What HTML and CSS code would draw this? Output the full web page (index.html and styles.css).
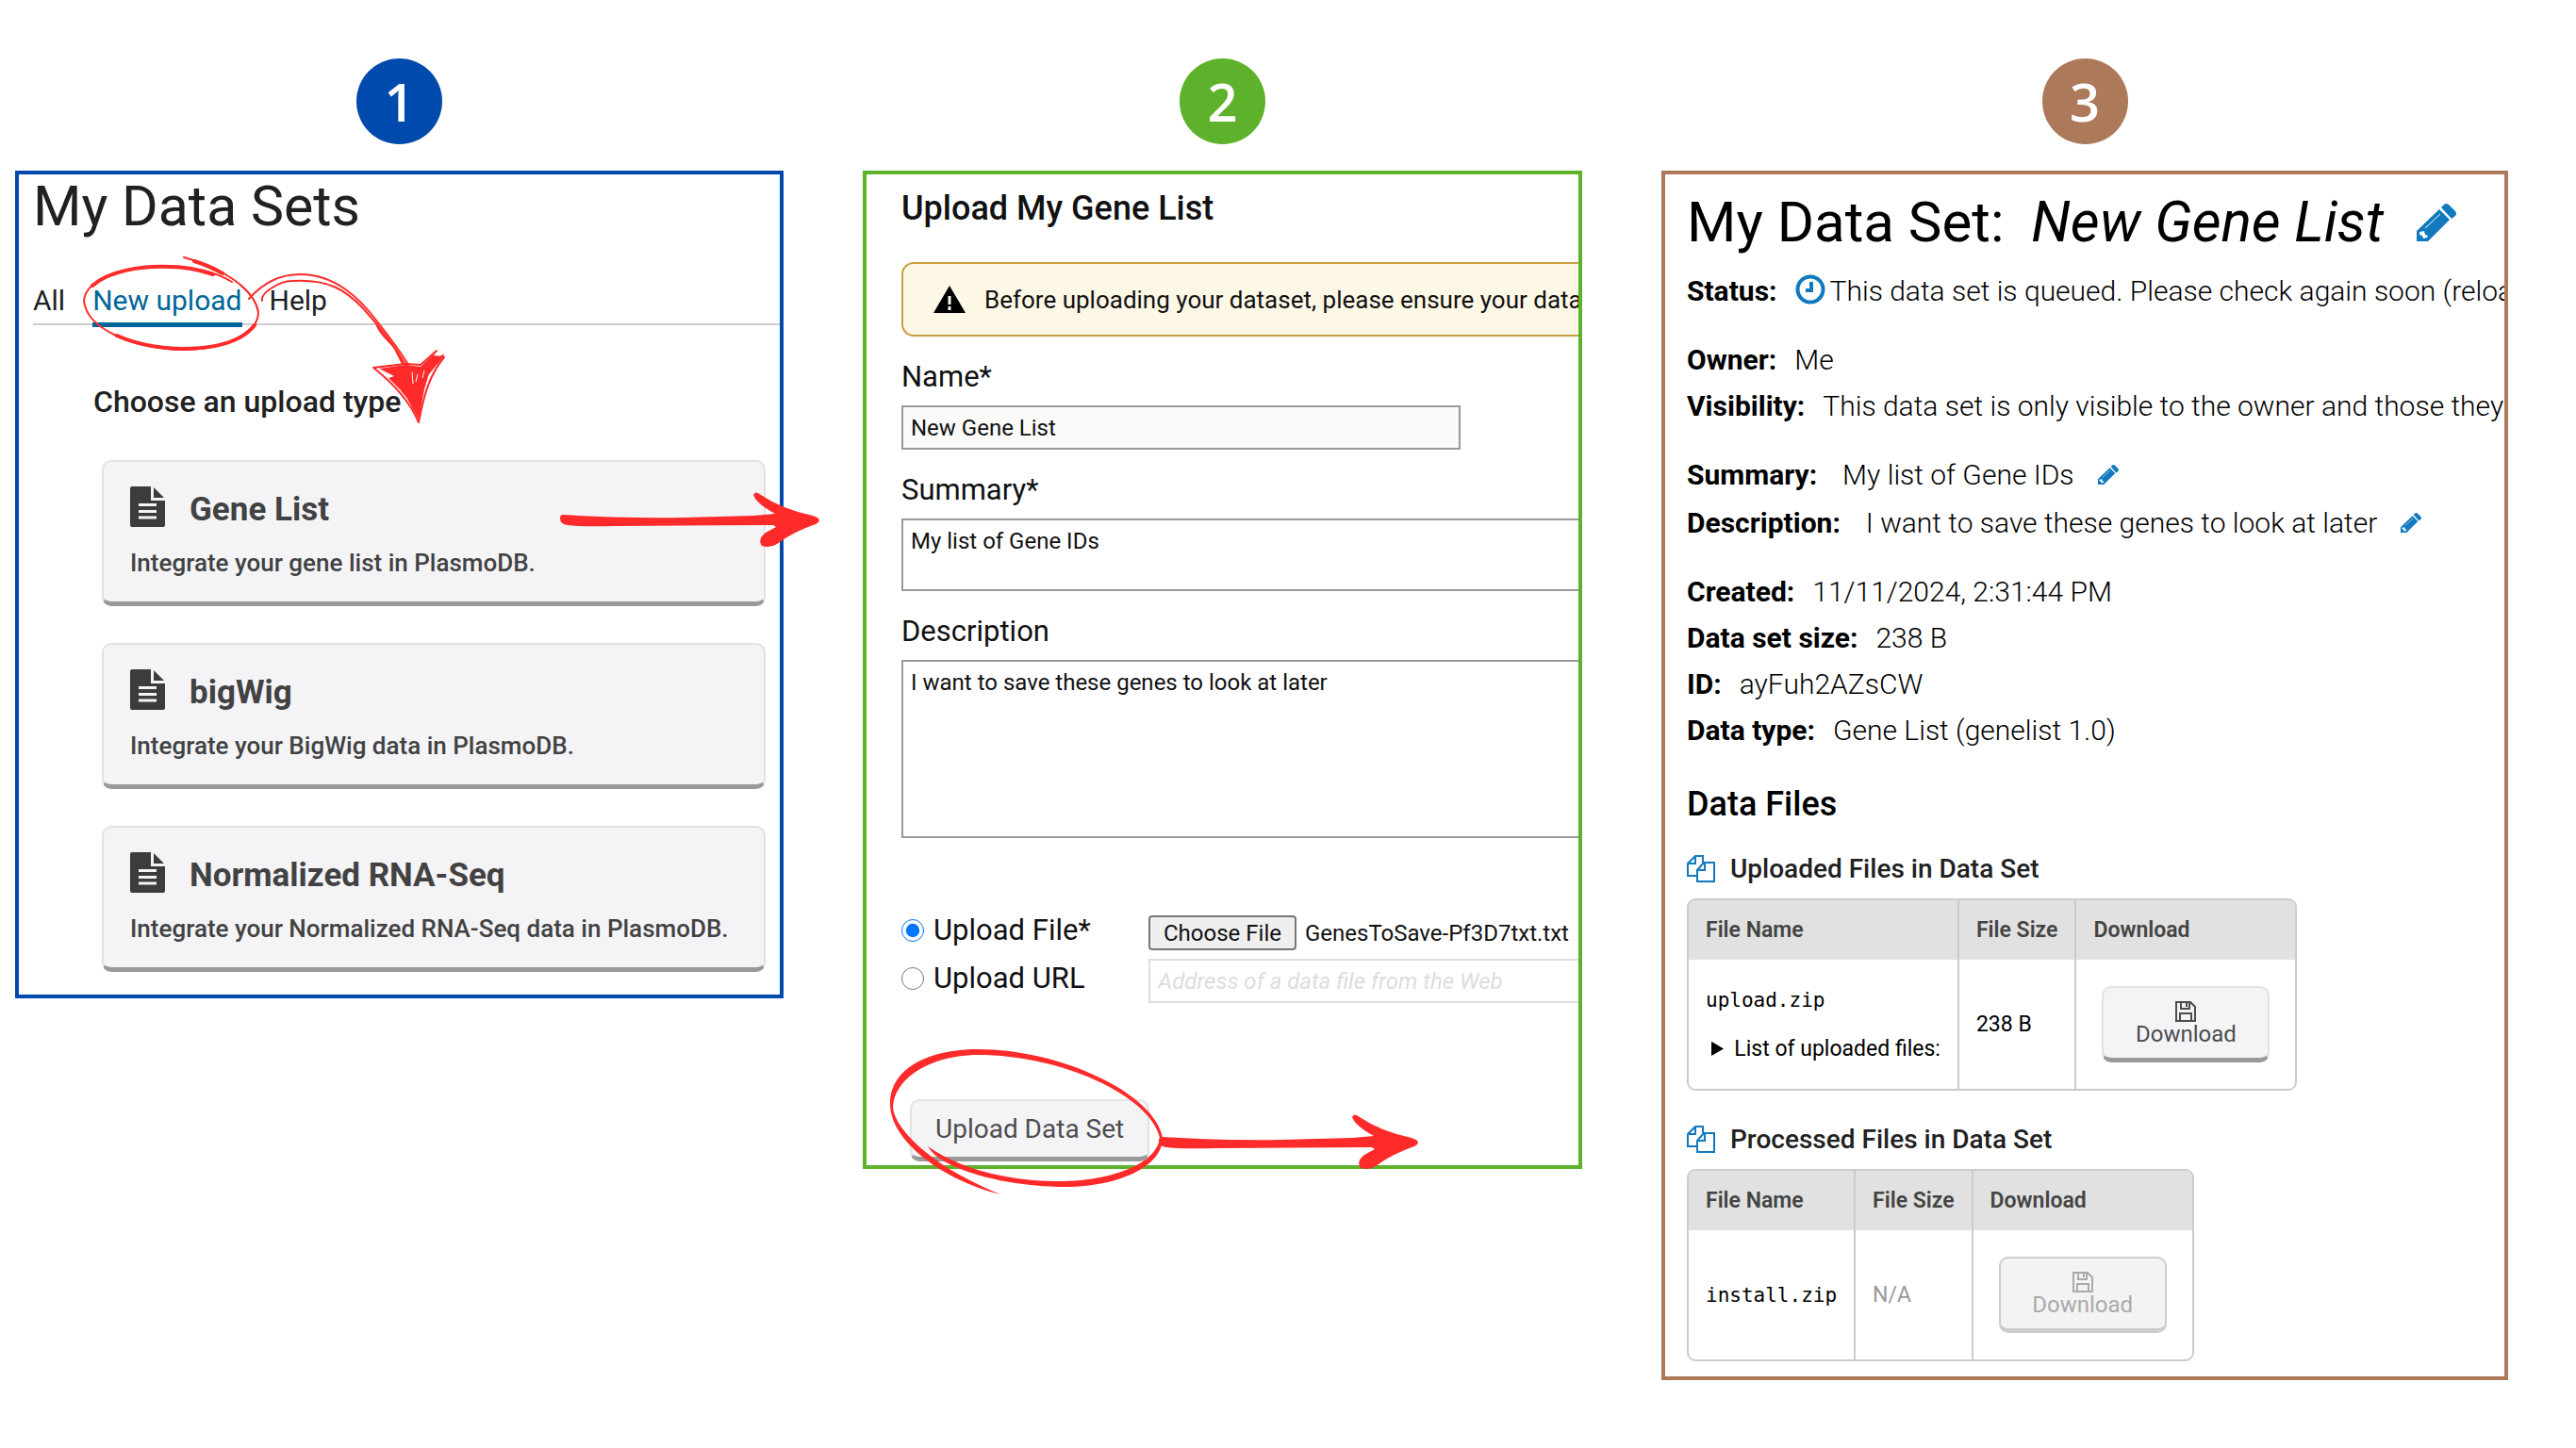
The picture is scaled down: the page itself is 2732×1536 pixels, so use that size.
FILE: index.html
```html
<!DOCTYPE html>
<html lang="en">
<head>
<meta charset="utf-8">
<title>Uploading a gene list</title>
<link rel="stylesheet" href="styles.css">
</head>
<body>
<svg class="sprite" aria-hidden="true">
  <symbol id="pencil" viewBox="0 0 42 40"><path d="M0 40V29L24 6l11 11-23 23zM26 4l3-3q2-2 5 0l7 7q2 3 0 5l-4 3z"/><path d="M3 30l5-1 1 4 3 1-1 2-4 1-1-3-3-1z" fill="#fff"/><path d="M9 26L25 11" stroke="#fff" stroke-width="1" fill="none"/></symbol>
  <symbol id="file" viewBox="0 0 37 43"><path d="M0 2q0-2 2-2h20v15h15v26q0 2-2 2H2q-2 0-2-2z"/><path d="M25 1l11 11H25z"/><path d="M9 19.500h19M9 26.500h19M9 33h19" stroke="#f4f4f7" stroke-width="3"/></symbol>
  <symbol id="copy" viewBox="0 0 30 30"><path d="M11 22H1V9l8-8h8v7M9 1v8H1M11 16l7-8h11v20H11zM19 8v8h-8" fill="none" stroke="currentColor" stroke-width="2"/></symbol>
  <symbol id="save" viewBox="0 0 22 22"><path d="M1 1h15l5 5v15H1zM5 21v-8h12v8M6 1v7h9V1M12 2v4" fill="none" stroke="currentColor" stroke-width="2"/></symbol>
  <symbol id="arrow" viewBox="0 0 276 60"><path d="M3 24Q70 28 130 27L205 25L228 23Q208 12 205 3Q207 -2 213 3Q235 18 268 25Q280 29 271 34Q248 42 233 53Q224 60 214 57Q209 50 218 43L229 37L226 35L60 36Q20 37 8 35Q0 34 0 28Q0 24 3 24z"/></symbol>
</svg>
<main class="steps">
  <section class="step blue">
    <div class="badge">1</div>
    <div class="panel sets">
      <h1 class="title">My Data Sets</h1>
      <nav class="tabs">
        <a href="#all">All</a>
        <a href="#new" class="active">New upload</a>
        <a href="#help">Help</a>
      </nav>
      <h2 class="choose">Choose an upload type</h2>
      <div class="cards">
        <button class="card raised" type="button"><svg><use href="#file"/></svg><strong>Gene List</strong><span>Integrate your gene list in PlasmoDB.</span></button>
        <button class="card raised" type="button"><svg><use href="#file"/></svg><strong>bigWig</strong><span>Integrate your BigWig data in PlasmoDB.</span></button>
        <button class="card raised" type="button"><svg><use href="#file"/></svg><strong>Normalized RNA-Seq</strong><span>Integrate your Normalized RNA-Seq data in PlasmoDB.</span></button>
      </div>
    </div>
    <svg class="ink ink-tab" viewBox="0 0 400 195">
      <g class="stroke">
        <path d="M115 8C155 18 190 42 194 66C194 88 160 106 112 106C60 104 12 84 9 54C11 32 46 18 95 17C125 18 150 24 166 34"/>
        <path class="bold" d="M190 80C176 98 146 105 112 105C84 104 62 99 44 91M18 38C36 22 70 17 100 18C118 18 134 22 146 26M126 12Q142 17 156 25"/>
        <path d="M184 52C200 34 218 26 238 26C276 26 302 52 320 76C335 95 345 108 353 122"/>
        <path d="M198 54C196 46 216 33 230 33C268 31 286 42 305 62C330 90 342 108 350 122"/>
        <path d="M319 78C322 90 335 98 339 105L347 121"/>
        <path d="M316 125L350 121L366 122L383 107M391 114C376 132 370 152 364 183C356 164 340 144 316 125"/>
        <path d="M366 126L390 112L372 134L388 114"/>
      </g>
      <path class="solid" d="M322 126L350 122L366 124L384 107L380 112L390 113L376 128L370 148L364 180L352 158L344 148L332 136L338 134z"/>
      <path class="gap" d="M357 130l1 12M363 132l-2 8M370 128l-2 8"/>
    </svg>
    <svg class="ink ink-card" viewBox="0 0 276 60"><use href="#arrow"/></svg>
  </section>

  <section class="step green">
    <div class="badge">2</div>
    <form class="panel form">
      <h2 class="heading">Upload My Gene List</h2>
      <div class="notice"><svg viewBox="0 0 34 29"><path d="M17 0l17 29H0z"/><path d="M17 11v9M17 22v4" stroke="#fdf7e6" stroke-width="3"/></svg><span>Before uploading your dataset, please ensure your data</span></div>
      <label for="name">Name*</label>
      <input id="name" class="field name" type="text" value="New Gene List">
      <label for="summary">Summary*</label>
      <textarea id="summary" class="field summary">My list of Gene IDs</textarea>
      <label for="description">Description</label>
      <textarea id="description" class="field description">I want to save these genes to look at later</textarea>
      <div class="sources">
        <label class="source"><input type="radio" name="source" checked>Upload File*</label>
        <input class="file" id="file-input" type="file" aria-label="Upload file">
        <label class="source"><input type="radio" name="source">Upload URL</label>
        <input class="field url" type="text" placeholder="Address of a data file from the Web" aria-label="Upload URL" disabled>
      </div>
      <button class="submit raised" type="button">Upload Data Set</button>
    </form>
    <svg class="ink ink-loop" viewBox="0 0 310 160">
      <path d="M126 155C70 142 8 100 9 58C9 24 45 1 102 1C190 1 290 48 298 95C298 126 250 147 195 147C130 147 62 128 49 104C80 126 130 141 188 141C245 141 292 122 295 95C285 50 190 7 102 7C55 7 14 30 12 62C13 84 50 124 126 155z"/>
    </svg>
    <svg class="ink ink-next" viewBox="0 0 276 60"><use href="#arrow"/></svg>
  </section>

  <section class="step brown">
    <div class="badge">3</div>
    <div class="panel details">
      <h1 class="title">My Data Set: <em>New Gene List</em> <svg class="edit-lg"><use href="#pencil"/></svg></h1>
      <dl>
        <div><dt>Status:</dt><dd><svg class="clock" viewBox="0 0 32 32"><circle cx="16" cy="16" r="13.500"/><path d="M17 8v9h-6"/></svg>This data set is queued. Please check again soon (reloa</dd></div>
        <div class="first"><dt>Owner:</dt><dd>Me</dd></div>
        <div><dt>Visibility:</dt><dd>This data set is only visible to the owner and those they</dd></div>
        <div class="first editable"><dt>Summary:</dt><dd>My list of Gene IDs<svg class="edit"><use href="#pencil"/></svg></dd></div>
        <div class="editable"><dt>Description:</dt><dd>I want to save these genes to look at later<svg class="edit"><use href="#pencil"/></svg></dd></div>
        <div class="first"><dt>Created:</dt><dd>11/11/2024, 2:31:44 PM</dd></div>
        <div><dt>Data set size:</dt><dd>238 B</dd></div>
        <div><dt>ID:</dt><dd>ayFuh2AZsCW</dd></div>
        <div><dt>Data type:</dt><dd>Gene List (genelist 1.0)</dd></div>
      </dl>
      <h2 class="heading">Data Files</h2>
      <h3 class="files-title"><svg><use href="#copy"/></svg>Uploaded Files in Data Set</h3>
      <table>
        <thead><tr><th>File Name</th><th>File Size</th><th>Download</th></tr></thead>
        <tbody><tr><td><code>upload.zip</code><details><summary>List of uploaded files:</summary></details></td><td>238 B</td><td class="action"><button class="download raised" type="button"><svg><use href="#save"/></svg>Download</button></td></tr></tbody>
      </table>
      <h3 class="files-title"><svg><use href="#copy"/></svg>Processed Files in Data Set</h3>
      <table>
        <thead><tr><th>File Name</th><th>File Size</th><th>Download</th></tr></thead>
        <tbody><tr><td><code>install.zip</code></td><td class="muted">N/A</td><td class="action"><button class="download raised" type="button" disabled><svg><use href="#save"/></svg>Download</button></td></tr></tbody>
      </table>
    </div>
  </section>
</main>
<script src="script.js"></script>
</body>
</html>
```
FILE: styles.css
```css
* { box-sizing: border-box; }
body { margin: 0; background: #fff; font-family: Roboto, "Liberation Sans", sans-serif; color: #212121; }
h1, h2, h3, dl, dd { margin: 0; font-weight: 400; }
.sprite { position: absolute; width: 0; height: 0; }
.steps { display: grid; grid-template-columns: 815fr 763fr 898fr; gap: 84px; align-items: start; padding: 62px 72px 72px 16px; }
.step { position: relative; min-width: 0; }
.blue { --accent: #004aad; }
.green { --accent: #5eb22b; }
.brown { --accent: #ac795a; }
.badge { width: 91px; height: 91px; margin: 0 auto 28px; border-radius: 50%; background: var(--accent); color: #fff; font: 600 56px/90px "Open Sans", sans-serif; text-align: center; }
.panel { border: 4px solid var(--accent); overflow: hidden; }
.title { font-size: 60px; line-height: 70px; white-space: nowrap; }
.heading { font-size: 36px; line-height: 46px; font-weight: 500; }

.sets { padding: 0 0 24px 15px; }
.sets .title { font-size: 59px; line-height: 68px; }
.tabs { display: flex; gap: 29px; height: 86px; margin-top: 6px; padding-top: 42px; border-bottom: 2px solid #ccc; }
.tabs a { height: 46px; color: #212121; font-size: 30px; line-height: 36px; text-decoration: none; }
.tabs .active { color: #069; border-bottom: 5px solid #069; }
.choose { margin: 63px 0 0 64px; font-size: 32px; line-height: 36px; font-weight: 500; }
.cards { display: grid; gap: 39px; margin: 44px 15px 0 73px; }
.raised { border: 2px solid #e2e2e5; border-bottom: 5px solid #999; border-radius: 10px; background: #f4f4f7; color: #424242; font-family: inherit; }
.card { display: grid; grid-template-columns: 37px 1fr; column-gap: 26px; align-items: start; align-content: start; height: 155px; padding: 26px 28px; text-align: left; }
.card svg { width: 37px; height: 43px; fill: #3c3c3c; }
.card strong { font-size: 35px; line-height: 50px; font-weight: 700; }
.card span { grid-column: 1 / 3; margin-top: 13px; font-size: 26px; line-height: 36px; font-weight: 500; white-space: nowrap; }

.form { display: flex; flex-direction: column; align-items: stretch; padding: 13px 0 4px 37px; color: #111; }
.notice { display: flex; align-items: center; gap: 20px; height: 79px; margin-top: 34px; padding-left: 32px; border: 2px solid #c9a03f; border-right: 0; border-radius: 13px 0 0 13px; background: #fdf7e6; font-size: 26px; white-space: nowrap; }
.notice svg { width: 34px; height: 29px; flex: none; }
.form > label { margin-top: 24px; font-size: 31px; line-height: 38px; }
.field { margin: 11px 0 0; padding: 6px 8px; border: 2px solid #999; border-radius: 0; background: #fff; color: #111; font: 24px/32px Roboto, sans-serif; resize: none; }
textarea.field { border-right: 0; }
.name { width: 593px; height: 47px; background: #fafaf8; }
.summary { height: 77px; }
.description { height: 189px; }
.sources { display: grid; grid-template-columns: 262px 1fr; row-gap: 9px; margin-top: 82px; align-items: center; }
.source { display: flex; align-items: center; gap: 10px; padding-bottom: 6px; font-size: 31px; line-height: 31px; }
.source input { width: 24px; height: 24px; margin: 0; accent-color: #0075ff; }
.file { width: 100%; height: 37px; font: 24px/32px Roboto, sans-serif; color: #111; }
.file::file-selector-button { height: 37px; margin: 0 9px 0 0; padding: 0 14px; border: 2px solid #777; border-radius: 4px; background: #efefef; color: #111; font: 24px/32px Roboto, sans-serif; }
.url { width: 100%; height: 47px; margin: 0; border-color: #ddd; border-right: 0; }
.url::placeholder { color: #ddd; font-style: italic; }
.submit { align-self: flex-start; height: 66px; margin: 102px 0 0 9px; padding: 0 25px; font-size: 28px; color: #4d4d4d; }

.details { padding: 16px 0 16px 23px; color: #000; }
.details .title em { margin-left: 14px; }
.edit-lg { width: 42px; height: 40px; margin-left: 20px; fill: #1179be; }
.details dl { margin: 19px 0 25px; }
.details dl div { display: flex; gap: 19px; height: 49px; font-size: 30px; line-height: 38px; white-space: nowrap; }
.details dt { font-weight: 700; }
.details dd { font-weight: 300; }
.details dl .first { margin-top: 24px; }
.details .editable { margin-bottom: 2px; }
.details .editable dd { margin-left: 8px; }
.clock { width: 32px; height: 32px; margin-right: 5px; vertical-align: -4px; fill: none; stroke: #1179be; stroke-width: 4; }
.edit { width: 22px; height: 21px; margin-left: 25px; fill: #1179be; }
.files-title { display: flex; gap: 16px; align-items: center; margin-top: 28px; font-size: 28px; line-height: 36px; font-weight: 500; color: #212121; }
.files-title svg { width: 30px; height: 30px; color: #1179be; }
table { margin: 13px 0 0; border: 2px solid #ccc; border-radius: 9px; border-spacing: 0; overflow: hidden; font-size: 23px; }
table + .files-title { margin-top: 34px; }
th { height: 63px; padding: 0 18px; background: #e1e1e1; color: #444; font-weight: 600; text-align: left; }
td { height: 137px; padding: 0 18px; }
th + th, td + td { border-left: 2px solid #ccc; }
code { font-family: "DejaVu Sans Mono", monospace; font-size: 21px; }
summary { margin-top: 25px; padding-left: 6px; }
.muted { color: #999; }
td.action { padding: 0 27px; }
.download { display: flex; flex-direction: column; align-items: center; width: 178px; height: 81px; padding: 14px 0 0; font-size: 24px; line-height: 26px; color: #4d4d4d; }
.download svg { width: 22px; height: 22px; }
.download:disabled { border-color: #ccc; color: #aaa; background: #f3f3f3; }

.ink { position: absolute; overflow: visible; pointer-events: none; fill: #ff2a2a; }
.ink .stroke { fill: none; stroke: #ff2a2a; stroke-width: 2; stroke-linecap: round; stroke-linejoin: round; }
.ink .bold { stroke-width: 4; }
.ink .gap { fill: none; stroke: #fff; stroke-width: 1; }
.ink-tab { left: 64px; top: 203px; width: 400px; height: 195px; }
.ink-card { left: 578px; top: 460px; width: 276px; height: 60px; }
.ink-loop { left: 20px; top: 1050px; width: 310px; height: 160px; }
.ink-next { left: 314px; top: 1120px; width: 276px; height: 60px; }
```
FILE: script.js
```js
const chosen = new DataTransfer();
chosen.items.add(new File(["PF3D7"], "GenesToSave-Pf3D7txt.txt"));
document.getElementById("file-input").files = chosen.files;
```
